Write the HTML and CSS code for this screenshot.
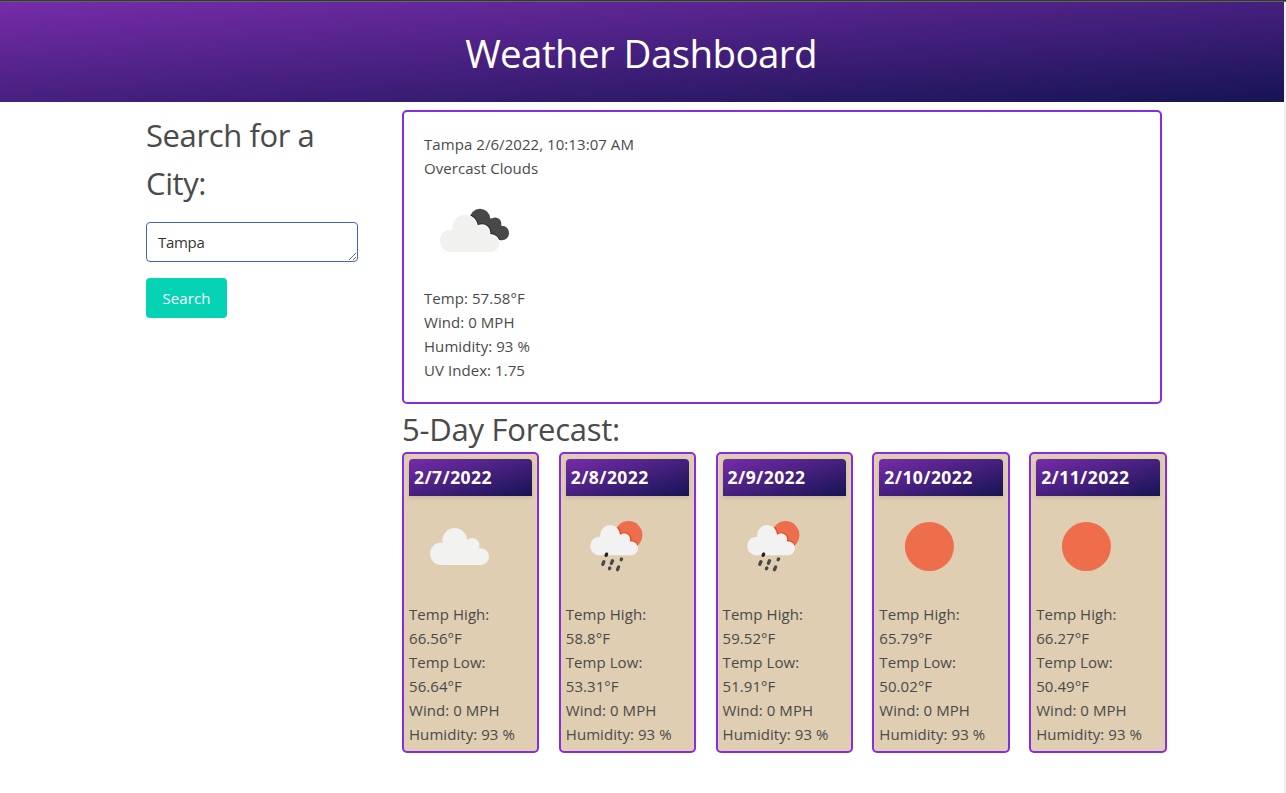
FILE: index.html
```
<!DOCTYPE html>
<html lang="en">
<head>
<meta charset="utf-8">
<title>Weather Dashboard</title>
<link rel="stylesheet" href="styles.css">
</head>
<body>
<svg class="defs" width="0" height="0" aria-hidden="true">
  <defs>
    <g id="cloud">
      <circle cx="32.3" cy="57.8" r="11.3"/>
      <circle cx="45.7" cy="44.4" r="12.3"/>
      <circle cx="63" cy="49.6" r="7.5"/>
      <circle cx="71.4" cy="60.5" r="8.6"/>
      <path d="M32.3 69.1L36 50L60 50L71.4 55V69.1Z"/>
    </g>
    <clipPath id="sun-clip"><circle cx="62.6" cy="38.9" r="13.8"/></clipPath>
    <clipPath id="dark-clip">
      <circle cx="56" cy="39" r="10.2"/>
      <circle cx="71.2" cy="43.6" r="6.2"/>
      <circle cx="77.8" cy="53" r="7.3"/>
      <path d="M50 40L70 38L78 50L76 60H55Z"/>
    </clipPath>
    <symbol id="icon-rain" viewBox="0 0 100 100">
      <circle cx="62.6" cy="38.9" r="13.8" fill="#ec6e4c"/>
      <g clip-path="url(#sun-clip)"><use href="#cloud" transform="translate(7.3 2.9) scale(.81 .815)" fill="#e8431b" stroke="#e8431b" stroke-width="2.4"/></g>
      <use href="#cloud" transform="translate(7.1 2.9) scale(.81 .815)" fill="#f2f2f2"/>
      <g stroke="#48484a" stroke-width="3.3" stroke-linecap="round">
        <path d="M40.6 58.1L40.1 59.4" stroke="#222"/>
        <path d="M37.9 65.7L36.8 68.4M46.5 64.7L45.4 67.4M55.5 63L55.2 63.7M43.8 72L43.5 72.7M52.6 71L51.5 73.7"/>
      </g>
    </symbol>
  </defs>
</svg>
<div class="topline"></div>
<div class="page">
  <header class="hero"><h1 class="hero-title">Weather Dashboard</h1></header>
  <main class="columns">
    <section class="search">
      <h2 class="heading search-heading">Search for a City:</h2>
      <textarea class="city" rows="1" spellcheck="false">Tampa</textarea>
      <button class="button">Search</button>
    </section>
    <section class="results">
      <article class="current">
        <p>Tampa 2/6/2022, 10:13:07 AM</p>
        <p>Overcast Clouds</p>
        <svg class="icon" viewBox="0 0 100 100">
          <g clip-path="url(#dark-clip)">
            <rect x="40" y="20" width="50" height="45" fill="#48484a"/>
            <use href="#cloud" x="-5" y="3" fill="#252527" stroke="#252527" stroke-width="3.6"/>
          </g>
          <use href="#cloud" x="-5" y="3" fill="#fff" stroke="#fff" stroke-width="1.8"/>
          <use href="#cloud" x="-5" y="3" fill="#f1f1f0"/>
        </svg>
        <p>Temp: 57.58°F</p>
        <p>Wind: 0 MPH</p>
        <p>Humidity: 93 %</p>
        <p>UV Index: 1.75</p>
      </article>
      <h2 class="heading forecast-heading">5-Day Forecast:</h2>
      <div class="forecast">
        <article class="day">
          <h3 class="date">2/7/2022</h3>
          <svg class="icon" viewBox="0 0 100 100"><use href="#cloud" fill="#f2f2f0"/></svg>
          <p>Temp High: 66.56°F</p><p>Temp Low: 56.64°F</p><p>Wind: 0 MPH</p><p>Humidity: 93 %</p>
        </article>
        <article class="day">
          <h3 class="date">2/8/2022</h3>
          <svg class="icon" viewBox="0 0 100 100"><use href="#icon-rain"/></svg>
          <p>Temp High: 58.8°F</p><p>Temp Low: 53.31°F</p><p>Wind: 0 MPH</p><p>Humidity: 93 %</p>
        </article>
        <article class="day">
          <h3 class="date">2/9/2022</h3>
          <svg class="icon" viewBox="0 0 100 100"><use href="#icon-rain"/></svg>
          <p>Temp High: 59.52°F</p><p>Temp Low: 51.91°F</p><p>Wind: 0 MPH</p><p>Humidity: 93 %</p>
        </article>
        <article class="day">
          <h3 class="date">2/10/2022</h3>
          <svg class="icon" viewBox="0 0 100 100"><circle cx="50.4" cy="50.5" r="24.5" fill="#ee6e4c"/></svg>
          <p>Temp High: 65.79°F</p><p>Temp Low: 50.02°F</p><p>Wind: 0 MPH</p><p>Humidity: 93 %</p>
        </article>
        <article class="day">
          <h3 class="date">2/11/2022</h3>
          <svg class="icon" viewBox="0 0 100 100"><circle cx="50.4" cy="50.5" r="24.5" fill="#ee6e4c"/></svg>
          <p>Temp High: 66.27°F</p><p>Temp Low: 50.49°F</p><p>Wind: 0 MPH</p><p>Humidity: 93 %</p>
        </article>
      </div>
    </section>
  </main>
</div>
</body>
</html>
```
FILE: styles.css
```
* { box-sizing: border-box; margin: 0; padding: 0; }
html, body { height: 100%; }
body {
  display: flex;
  flex-direction: column;
  overflow: hidden;
  background: #fff;
  color: #4a4a4a;
  font: 400 15px/24px "Segoe UI", "Open Sans", "Noto Sans", sans-serif;
  letter-spacing: 0.06px;
}
.defs { position: absolute; }
.topline { flex: none; height: 2px; background: #32363d; border-bottom: 1px solid #636363; }
.page { flex: 1; border-right: 2px solid #f1f1f1; }
.hero {
  display: flex;
  align-items: center;
  justify-content: center;
  height: 100px;
  background: linear-gradient(to bottom right, #762ca9, #161454);
}
.hero-title { color: #fff; font-size: 38.5px; font-weight: 400; line-height: 60px; letter-spacing: -0.6px; padding: 1px 2px 0 0; }
.columns { display: flex; padding: 8px 117px 0 146px; }
.search { width: 212px; margin-right: 44px; padding-top: 1px; }
.heading { font-size: 31px; font-weight: 400; line-height: 48px; letter-spacing: -0.4px; }
.search-heading { width: 200px; margin-bottom: 15px; }
.forecast-heading { height: 48px; line-height: 50px; letter-spacing: -0.25px; }
.city {
  display: block;
  width: 212px;
  height: 40px;
  margin-bottom: 16px;
  padding: 7px 11px;
  border: 1px solid #485fc7;
  border-radius: 4px;
  background: #fff;
  color: #363636;
  font: inherit;
  letter-spacing: -0.3px;
  resize: vertical;
  overflow: hidden;
  outline: none;
}
.button {
  display: block;
  width: 81px;
  height: 40px;
  border: 0;
  border-radius: 4px;
  background: #05d3b4;
  color: #fff;
  font: inherit;
  letter-spacing: inherit;
}
.results { flex: none; width: 765px; }
.current { width: 760px; height: 294px; padding: 20px; border: 2px solid #8a2be2; border-radius: 5px; }
.icon { display: block; width: 100px; height: 100px; margin-bottom: 6px; }
.forecast { display: grid; grid-template-columns: repeat(5, 137.45px); column-gap: 19.35px; }
.day { height: 301px; padding: 5px; border: 2px solid #8a2be2; border-radius: 5px; background: #dfceb2; }
.date {
  height: 37px;
  padding: 0 5px;
  border-radius: 4px 4px 0 0;
  background: linear-gradient(to bottom right, #762ca9, #161454);
  box-shadow: 0 2px 4px rgba(10, 10, 10, .1);
  color: #fff;
  font-size: 17.5px;
  font-weight: 700;
  line-height: 37px;
  letter-spacing: 0.42px;
}
```
